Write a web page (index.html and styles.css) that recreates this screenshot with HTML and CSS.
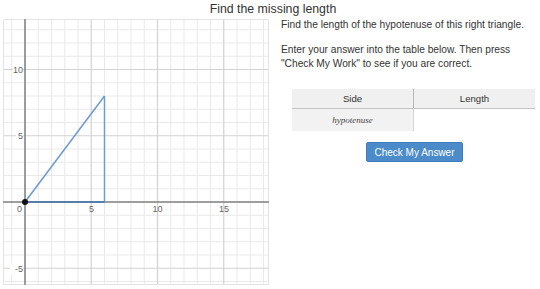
FILE: index.html
```html
<!DOCTYPE html>
<html lang="en">
  <head>
    <meta charset="UTF-8" />
    <meta name="viewport" content="width=device-width, initial-scale=1.0" />
    <title>Find the missing length</title>
    <link rel="stylesheet" href="styles.css">
  </head>
  <body>
    <h1 class="title">Find the missing length</h1>
    <div class="main">
      <svg class="graph" width="266" height="266" viewBox="0 0 266 266">
        <g id="minor" stroke="#e9e9e9" stroke-width="1"></g>
        <g id="major" stroke="#d2d2d2" stroke-width="1.2"></g>
        <rect x="0.5" y="0.5" width="265" height="265" fill="none" stroke="#e4e4e4" />
        <line x1="22" y1="0" x2="22" y2="266" stroke="#555" stroke-width="1" />
        <line x1="0" y1="183" x2="266" y2="183" stroke="#555" stroke-width="1" />
        <g class="labels" font-size="9" fill="#666">
          <rect x="10" y="45" width="10" height="11" fill="#fff" />
          <text x="20" y="54" text-anchor="end">10</text>
          <rect x="13" y="111" width="7" height="11" fill="#fff" />
          <text x="20" y="120" text-anchor="end">5</text>
          <text x="19" y="193" text-anchor="end">0</text>
          <text x="88.5" y="193" text-anchor="middle">5</text>
          <text x="154.5" y="193" text-anchor="middle">10</text>
          <text x="221" y="193" text-anchor="middle">15</text>
          <rect x="7" y="244" width="13" height="11" fill="#fff" />
          <text x="20" y="253" text-anchor="end">-5</text>
        </g>
        <line x1="22" y1="183" x2="101.5" y2="77" stroke="#6f9ccf" stroke-width="1.5" />
        <line x1="101.5" y1="77" x2="101.5" y2="183" stroke="#6f9ccf" stroke-width="1.5" />
        <line x1="22" y1="183" x2="101.5" y2="183" stroke="#3f72b3" stroke-width="1.6" />
        <circle cx="22" cy="183" r="3" fill="#111" />
      </svg>
      <div class="panel">
        <p>Find the length of the hypotenuse of this right triangle.</p>
        <p>Enter your answer into the table below. Then press "Check My Work" to see if you are correct.</p>
        <table class="answers">
          <tr>
            <th>Side</th>
            <th>Length</th>
          </tr>
          <tr>
            <td class="side">hypotenuse</td>
            <td class="value"></td>
          </tr>
        </table>
        <div class="actions">
          <button class="check">Check My Answer</button>
        </div>
      </div>
    </div>
    <script>
      // grid lines: one per unit, darker every 5
      var unit = 13.25, ox = 22, oy = 183;
      var ns = "http://www.w3.org/2000/svg";
      function addLine(group, x1, y1, x2, y2) {
        var l = document.createElementNS(ns, "line");
        l.setAttribute("x1", x1);
        l.setAttribute("y1", y1);
        l.setAttribute("x2", x2);
        l.setAttribute("y2", y2);
        document.getElementById(group).appendChild(l);
      }
      for (var i = -1; i <= 18; i++) {
        var x = ox + i * unit;
        addLine(i % 5 === 0 ? "major" : "minor", x, 0, x, 266);
      }
      for (var j = -6; j <= 13; j++) {
        var y = oy - j * unit;
        addLine(j % 5 === 0 ? "major" : "minor", 0, y, 266, y);
      }
    </script>
  </body>
</html>
```

FILE: styles.css
```css
body {
  margin: 0;
  background-color: #fff;
  font-family: "Liberation Sans", Arial, sans-serif;
  color: #333;
}
.title {
  margin: 0;
  height: 19px;
  line-height: 18px;
  font-size: 12.3px;
  font-weight: normal;
  text-align: center;
  padding-left: 6px;
}
.main {
  display: flex;
}
.graph {
  display: block;
  margin-left: 3px;
  flex: none;
}
.labels text {
  font-family: "Liberation Sans", Arial, sans-serif;
}
.panel {
  margin-left: 12px;
  margin-top: -1px;
  width: 254px;
  font-size: 10.2px;
  line-height: 14px;
}
.panel p {
  margin: 0 0 11px 0;
}
.answers {
  margin: 18px 0 0 11px;
  width: 243px;
  border-collapse: collapse;
  table-layout: fixed;
}
.answers th {
  height: 19px;
  background-color: #f0f0f0;
  font-weight: normal;
  font-size: 9.6px;
  border-bottom: 1px solid #c4c4c4;
  padding: 0;
}
.answers th:first-child {
  border-right: 1px solid #b8b8b8;
}
.answers td {
  height: 22px;
  padding: 0;
  text-align: center;
}
.answers .side {
  background-color: #f2f2f2;
  border-right: 1px solid #d4d4d4;
  font-family: "Liberation Serif", "Times New Roman", serif;
  font-style: italic;
  font-size: 9px;
  color: #444;
}
.actions {
  display: flex;
  justify-content: center;
  margin: 11px 0 0 13px;
}
.check {
  width: 97px;
  height: 20px;
  padding: 0;
  border: 1px solid #3f7cb9;
  border-radius: 2px;
  background-color: #4b8bc9;
  color: #fff;
  font-family: "Liberation Sans", Arial, sans-serif;
  font-size: 10px;
  cursor: pointer;
}
```
